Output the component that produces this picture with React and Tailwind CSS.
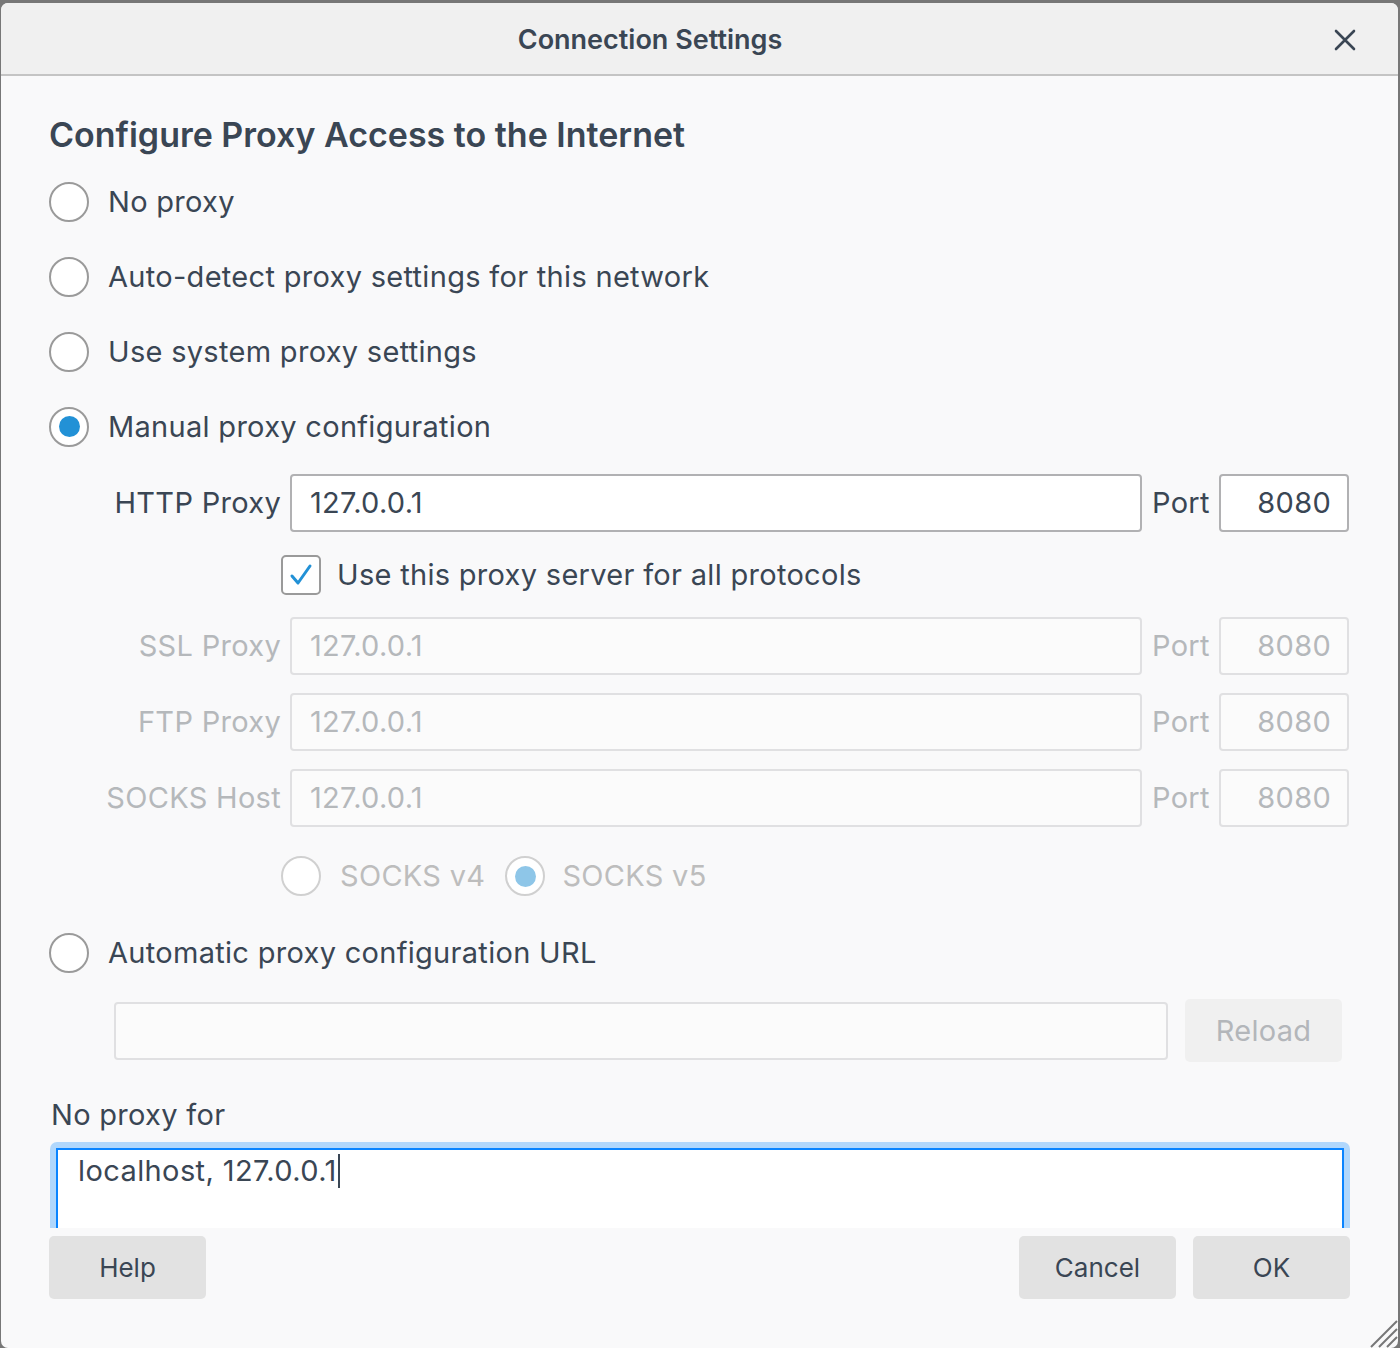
import React from "react";

const font = { fontFamily: "Inter, 'Noto Sans', 'Liberation Sans', sans-serif" };

// --- radio circle ---
const Radio = ({ checked = false, disabled = false }) => (
  <span
    className={`flex h-[40px] w-[40px] shrink-0 items-center justify-center rounded-full border-2 bg-white ${
      disabled ? "border-[#d0d0d0]" : "border-[#9a9a9a]"
    }`}
  >
    {checked && (
      <span
        className={`h-[21px] w-[21px] rounded-full ${
          disabled ? "bg-[#8ec6e8]" : "bg-[#2291d6]"
        }`}
      />
    )}
  </span>
);

const RadioRow = ({ label, checked }) => (
  <div className="flex h-[75px] items-center">
    <Radio checked={checked} />
    <span className="ml-[19px] text-[29px] tracking-[0.3px] text-[#3a4654]">{label}</span>
  </div>
);

// --- label + host input + port ---
const ProxyRow = ({ label, value, disabled = false }) => (
  <div className="flex h-[58px] items-center">
    <span
      className={`w-[232px] shrink-0 text-right text-[29px] tracking-[0.3px] ${
        disabled ? "text-[#b5b8bb]" : "text-[#3a4654]"
      }`}
    >
      {label}
    </span>
    <div
      className={`ml-[9px] flex h-[58px] w-[852px] items-center rounded-[4px] border-2 px-[18px] text-[29px] tracking-[0.3px] ${
        disabled
          ? "border-[#e0e0e2] bg-[#fbfbfb] text-[#b5b8bb]"
          : "border-[#b1b1b3] bg-white text-[#3a4654]"
      }`}
    >
      {value}
    </div>
    <span
      className={`ml-[10px] w-[58px] text-[29px] tracking-[0.3px] ${
        disabled ? "text-[#b5b8bb]" : "text-[#3a4654]"
      }`}
    >
      Port
    </span>
    <div
      className={`ml-[9px] flex h-[58px] w-[130px] items-center justify-end rounded-[4px] border-2 px-[16px] text-[29px] tracking-[0.3px] ${
        disabled
          ? "border-[#e0e0e2] bg-[#fbfbfb] text-[#b5b8bb]"
          : "border-[#b1b1b3] bg-white text-[#3a4654]"
      }`}
    >
      8080
    </div>
  </div>
);

const Button = ({ children, className = "" }) => (
  <div
    className={`flex h-[63px] w-[157px] items-center justify-center rounded-[5px] bg-[#e2e2e2] text-[26px] text-[#3a4654] ${className}`}
  >
    {children}
  </div>
);

export default function App() {
  return (
    <div className="h-[1348px] w-[1400px] overflow-hidden bg-[#777777] pl-px pt-[3px]" style={font}>
      <div className="relative h-[1345px] w-[1397px] overflow-hidden rounded-[7px] bg-[#f9f9fa]">
        {/* Header */}
        <div className="relative flex h-[73px] items-center justify-center border-b-2 border-[#c4c4c4] bg-[#f0f0f0] pr-[99px] pt-[4px]">
          <span className="text-[27px] font-semibold text-[#3a4654]">Connection Settings</span>
          <svg
            className="absolute right-[42px] top-[26px]"
            width="22"
            height="22"
            viewBox="0 0 22 22"
            fill="none"
            stroke="#3a4654"
            strokeWidth="2.6"
            strokeLinecap="round"
          >
            <path d="M2 2 L20 20 M20 2 L2 20" />
          </svg>
        </div>

        {/* Body */}
        <div className="h-[1152px] overflow-hidden pl-[48px] pr-[48px]">
          <h1 className="mt-[38px] flex h-[40px] items-center text-[34px] font-semibold text-[#3a4654]">
            Configure Proxy Access to the Internet
          </h1>

          <div className="mt-[10px]">
            <RadioRow label="No proxy" />
            <RadioRow label="Auto-detect proxy settings for this network" />
            <RadioRow label="Use system proxy settings" />
            <RadioRow label="Manual proxy configuration" checked />
          </div>

          <div className="mt-[10px]">
            <ProxyRow label="HTTP Proxy" value="127.0.0.1" />
          </div>

          <div className="mt-[13px] flex h-[60px] items-center pl-[232px]">
            <span className="flex h-[40px] w-[40px] items-center justify-center rounded-[5px] border-2 border-[#9a9a9a] bg-white">
              <svg width="26" height="26" viewBox="0 0 26 26" fill="none" stroke="#2291d6" strokeWidth="3" strokeLinecap="round" strokeLinejoin="round">
                <path d="M4 14 L10 21 L22 4" />
              </svg>
            </span>
            <span className="ml-[16px] text-[29px] tracking-[0.3px] text-[#3a4654]">Use this proxy server for all protocols</span>
          </div>

          <div className="mt-[12px] flex flex-col gap-[18px]">
            <ProxyRow label="SSL Proxy" value="127.0.0.1" disabled />
            <ProxyRow label="FTP Proxy" value="127.0.0.1" disabled />
            <ProxyRow label="SOCKS Host" value="127.0.0.1" disabled />
          </div>

          <div className="mt-[29px] flex h-[40px] items-center pl-[232px]">
            <Radio disabled />
            <span className="ml-[19px] text-[29px] tracking-[0.3px] text-[#bdbdbd]">SOCKS v4</span>
            <span className="ml-[20px]">
              <Radio checked disabled />
            </span>
            <span className="ml-[17px] text-[29px] tracking-[0.3px] text-[#bdbdbd]">SOCKS v5</span>
          </div>

          <div className="mt-[37px] flex h-[40px] items-center">
            <Radio />
            <span className="ml-[19px] text-[29px] tracking-[0.3px] text-[#3a4654]">Automatic proxy configuration URL</span>
          </div>

          <div className="mt-[26px] flex h-[63px] items-center pl-[65px] pr-[8px]">
            <div className="h-[58px] flex-1 rounded-[4px] border-2 border-[#e0e0e2] bg-[#fbfbfb]" />
            <div className="ml-[17px] flex h-[63px] w-[157px] items-center justify-center rounded-[5px] bg-[#f0f0f0] text-[29px] tracking-[0.3px] text-[#b3b6ba]">
              Reload
            </div>
          </div>

          <div className="mt-[36px] flex h-[34px] items-center pl-[2px] text-[29px] tracking-[0.3px] text-[#3a4654]">No proxy for</div>

          <div className="ml-[1px] mt-[10px] rounded-[7px] bg-[#b0d7fc] p-[6px]">
            <div className="h-[120px] border-2 border-[#0a84ff] bg-white pl-[20px] pt-[1px]">
              <div className="flex h-[40px] items-center text-[29px] tracking-[0.4px] text-[#3a4654]">
                localhost, 127.0.0.1
                <span className="ml-px h-[34px] w-[2px] bg-[#3a4654]" />
              </div>
            </div>
          </div>
        </div>

        {/* Footer */}
        <div className="mt-[8px] flex items-center pl-[48px] pr-[48px]">
          <Button>Help</Button>
          <div className="flex-1" />
          <Button>Cancel</Button>
          <Button className="ml-[17px]">OK</Button>
        </div>

        {/* resize grip */}
        <svg className="absolute bottom-[0px] right-[0px]" width="28" height="28" viewBox="0 0 28 28" stroke="#777777" strokeWidth="2">
          <path d="M27 1 L1 27 M27 9 L9 27 M27 17 L17 27" />
        </svg>
      </div>
    </div>
  );
}
